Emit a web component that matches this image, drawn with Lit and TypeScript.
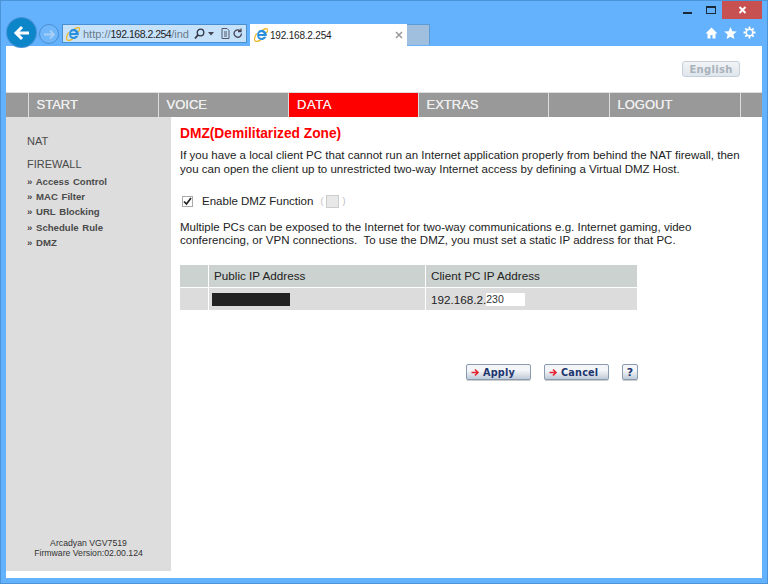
import { LitElement, html, css, svg } from "lit";
import { customElement } from "lit/decorators.js";

const ieIcon = (size: number) => html`<svg class="ie" width=${size} height=${size} viewBox="0 0 16 16">
  <path d="M3 6C.8 10 .2 13.700 1.300 14.700c1.200 1.100 4 .5 6.500-1.100" fill="none" stroke="#ecb92c" stroke-width="1.500"/>
  <path d="M9.500 2.500C12.500.6 14.800.4 15.300 1.300c.6.900 0 2.700-1.300 4.700" fill="none" stroke="#ecb92c" stroke-width="1.500"/>
  <path d="M8.500 2a6 6 0 0 1 6 7.200H5.700c.3 2.400 4 2.900 5.800.8h2.700c-1.300 2.700-3.500 3.800-5.700 3.800A6 6 0 0 1 8.500 2zM5.700 6.800h5.400c-.2-2.500-5-2.500-5.400 0z" fill="#2a8fdc" fill-rule="evenodd"/>
</svg>`;

const redArrow = svg`<path d="M.5 4.500h6.500M4 1.500l3 3-3 3" fill="none" stroke="#e8232f" stroke-width="1.600"/>`;

@customElement("app-root")
export class AppRoot extends LitElement {
  static styles = css`
    :host { display: block; width: 768px; height: 584px; font-family: "Liberation Sans", Arial, sans-serif; color: #222; overflow: hidden; }
    .window { position: relative; box-sizing: border-box; width: 768px; height: 584px; background: #64b1fd; border: 1px solid #4b94d8; padding: 0 5px 5px; display: flex; flex-direction: column; }
    .chrome { height: 45px; flex: none; position: relative; display: flex; align-items: flex-start; box-sizing: border-box; padding-top: 17px; }
    .back { position: absolute; left: 1px; top: 17px; width: 29px; height: 29px; border-radius: 50%; background: #0d86c9; display: flex; align-items: center; justify-content: center; box-shadow: 0 0 0 1px #4b94d8; }
    .fwd { position: absolute; left: 33px; top: 23px; width: 20px; height: 20px; box-sizing: border-box; border-radius: 50%; border: 1px solid #4a8fd0; background: #6fb6fb; display: flex; align-items: center; justify-content: center; }
    .addr { position: absolute; left: 56px; top: 23px; width: 185px; height: 19px; box-sizing: border-box; border: 1px solid #4a8fcf; background: #c6e2fb; display: flex; align-items: center; padding-left: 3px; font-size: 11px; color: #6a7b8a; white-space: nowrap; }
    .addr b { font-weight: normal; color: #222; font-size: 10.500px; letter-spacing: -.5px; }
    .addr .url { margin-left: 3px; width: 108px; overflow: hidden; flex: none; }
    .addr .tools { display: flex; align-items: center; gap: 3px; margin-left: 3px; }
    .addr .compat { margin-left: 4px; }
    .tab { position: absolute; left: 244px; top: 23px; width: 157px; height: 22px; background: #fff; display: flex; align-items: center; padding-left: 4px; box-sizing: border-box; font-size: 10px; letter-spacing: -.2px; color: #222; }
    .tab span { margin-left: 2px; flex: 1; }
    .tab .x { flex: none; margin-right: 4px; font-size: 0; }
    .newtab { position: absolute; left: 401px; top: 23px; width: 23px; height: 21px; background: #a0bfde; border: 1px solid #5b9bd8; border-left: none; border-bottom: none; box-sizing: border-box; }
    .caption { position: absolute; right: 0; top: 0; display: flex; align-items: flex-start; }
    .caption .min { width: 9px; height: 2px; background: #1b2a38; margin: 11px 14px 0 0; }
    .caption .max { width: 10px; height: 8px; box-sizing: border-box; border: 1px solid #1b2a38; border-top-width: 2px; margin: 5px 6px 0 0; }
    .caption .close { width: 40px; height: 18px; background: #c75050; display: flex; align-items: center; justify-content: center; }
    .tools-right { position: absolute; right: 6px; top: 25px; display: flex; gap: 6px; align-items: center; }

    .page { flex: 1; background: #fff; display: flex; flex-direction: column; min-height: 0; }
    .head { height: 47px; flex: none; display: flex; justify-content: flex-end; align-items: flex-start; padding: 15px 22px 0 0; box-sizing: border-box; border-bottom: 1px solid #ddd; }
    .lang { width: 58px; height: 16px; box-sizing: border-box; border: 1px solid #c5d0da; border-radius: 3px; background: linear-gradient(#f2f4f6, #dfe6ec); font: bold 10px "DejaVu Sans", sans-serif; letter-spacing: .3px; color: #a8b2bc; display: flex; align-items: center; justify-content: center; }
    nav { height: 24px; flex: none; background: #999; display: grid; grid-template-columns: 22px 130px 130px 130px 130px 61px 131px 1fr; }
    nav div { box-sizing: border-box; border-left: 1px solid #ddd; color: #eee; font-size: 13px; display: flex; align-items: center; padding: 0 0 1px 7.500px; text-shadow: 0 0 .6px #fff; }
    nav div:first-child { border-left: none; }
    nav .on { background: #f00; color: #f4e9e9; padding-left: 8px; letter-spacing: .6px; }
    .body { flex: 1; display: flex; min-height: 0; }
    aside { width: 165px; flex: none; background: #ddd; margin-bottom: 7px; display: flex; flex-direction: column; padding: 18px 0 0 21px; box-sizing: border-box; color: #444; }
    aside .top { font-size: 11px; line-height: 13px; margin-bottom: 10px; color: #4a4a4a; }
    aside ul { list-style: none; margin: -7px 0 0; padding: 0; font-size: 9.600px; font-weight: bold; color: #4a4a4a; }
    aside li { height: 15.200px; line-height: 15px; white-space: nowrap; word-spacing: 1px; }
    aside .foot { margin: auto 0 13px -21px; text-align: center; font-size: 8.700px; line-height: 10px; color: #333; }
    main { flex: 1; padding: 9px 0 0 9px; min-width: 0; color: #222; }
    h1 { margin: 0; font-size: 13.750px; line-height: 16px; font-weight: bold; color: #f00; }
    p { margin: 0; font-size: 11.520px; white-space: nowrap; }
    .intro { margin-top: 6px; line-height: 14px; }
    .enable { display: flex; align-items: center; margin: 17px 0 0 2px; height: 16px; font-size: 11.520px; }
    .check { width: 11px; height: 11px; box-sizing: border-box; border: 1px solid #aaa; background: #fff; display: flex; margin-right: 9px; }
    .paren { color: #bbb; font-size: 9px; margin-left: 7px; display: flex; align-items: center; gap: 3px; }
    .paren i { width: 11px; height: 11px; border: 1px solid #ccc; background: #e8e8e8; display: block; }
    .multi { margin-top: 12px; line-height: 13px; }
    .ip-table { margin-top: 18px; width: 457px; display: grid; grid-template-columns: 28px 216px 1fr; gap: 1px; font-size: 11.700px; }
    .ip-table > div { height: 22px; display: flex; align-items: center; padding: 0 0 2px 5px; box-sizing: border-box; }
    .hd { background: #ccd2cf; }
    .rw { background: #dcdcdc; }
    .ip-table .maskcell { padding-bottom: 0; }
    .mask { width: 78px; height: 13px; background: #222; margin-left: -2px; }
    .ipfield { width: 39px; height: 13px; background: #fff; font-size: 10.500px; line-height: 13px; color: #333; }
    .actions { display: flex; margin: 54px 0 0 286px; align-items: center; }
    .btn { height: 16px; box-sizing: border-box; border: 1px solid #8a9bb0; border-radius: 2px; background: linear-gradient(#f3f5f8 40%, #bfcbd8); display: flex; align-items: center; gap: 3px; padding-left: 4px; font: bold 9.700px "DejaVu Sans", sans-serif; color: #1c3570; letter-spacing: .2px; box-shadow: 0 1px 0 #ccc; }
    .apply, .cancel { width: 65px; margin-right: 13px; }
    .help { width: 16px; font-size: 11px; justify-content: center; padding-left: 0; }
    svg { display: block; flex: none; }
  `;

  render() {
    return html`<div class="window">
      <div class="chrome">
        <div class="back"><svg width="18" height="16" viewBox="0 0 18 16"><path d="M16 8H3M9 2L3 8l6 6" fill="none" stroke="#fff" stroke-width="3"/></svg></div>
        <div class="fwd"><svg width="13" height="11" viewBox="0 0 13 11"><path d="M1 5.500h10M7 1.500l4 4-4 4" fill="none" stroke="#a9cff5" stroke-width="1.800"/></svg></div>
        <div class="addr">
          ${ieIcon(14)}
          <span class="url">http://<b>192.168.2.254</b>/ind</span>
          <span class="tools">
            <svg width="11" height="12" viewBox="0 0 11 12"><circle cx="6.500" cy="4.500" r="3.300" fill="none" stroke="#334" stroke-width="1.300"/><path d="M4 7L1 10.500" stroke="#334" stroke-width="1.800"/></svg>
            <svg width="6" height="4" viewBox="0 0 6 4"><path d="M0 0h6L3 3.500z" fill="#445"/></svg>
            <svg class="compat" width="9" height="11" viewBox="0 0 9 11"><path d="M1 .5h5l2 2v8H1zM3 4h3M3 6h3M3 8h3" fill="none" stroke="#556" stroke-width="1"/></svg>
            <svg width="10" height="11" viewBox="0 0 10 11"><path d="M8.500 5.500a3.700 3.700 0 1 1-1.200-2.700M8 .5v3H5" fill="none" stroke="#445" stroke-width="1.300"/></svg>
          </span>
        </div>
        <div class="tab">
          ${ieIcon(14)}
          <span>192.168.2.254</span>
          <svg class="x" width="8" height="8" viewBox="0 0 8 8"><path d="M1 1l6 6M7 1L1 7" stroke="#999" stroke-width="1.500"/></svg>
        </div>
        <div class="newtab"></div>
        <div class="caption">
          <div class="min"></div>
          <div class="max"></div>
          <div class="close"><svg width="9" height="8" viewBox="0 0 9 8"><path d="M1.500 1l6 6M7.500 1l-6 6" stroke="#fff" stroke-width="2"/></svg></div>
        </div>
        <div class="tools-right">
          <svg width="13" height="12" viewBox="0 0 13 12"><path d="M6.500.5L.5 6.500h2V11.500h3V8h2v3.500h3V6.500h2z" fill="#fff"/></svg>
          <svg width="13" height="12" viewBox="0 0 13 12"><path d="M6.500 0l1.800 4.200 4.500.4-3.400 3 1 4.400-3.900-2.300L2.600 12l1-4.400L.2 4.600l4.500-.4z" fill="#fff"/></svg>
          <svg width="13" height="13" viewBox="0 0 13 13"><circle cx="6.500" cy="6.500" r="3.300" fill="none" stroke="#fff" stroke-width="1.600"/><path d="M6.500.5v2.400M6.500 10v2.500M.5 6.500h2.400M10 6.500h2.500M2.300 2.300L4 4M9 9l1.700 1.700M10.700 2.300L9 4M4 9l-1.700 1.700" stroke="#fff" stroke-width="1.800"/></svg>
        </div>
      </div>
      <div class="page">
        <div class="head"><div class="lang">English</div></div>
        <nav>
          <div></div><div>START</div><div>VOICE</div><div class="on">DATA</div><div>EXTRAS</div><div></div><div>LOGOUT</div><div></div>
        </nav>
        <div class="body">
          <aside>
            <div class="top">NAT</div>
            <div class="top">FIREWALL</div>
            <ul>
              <li>» Access Control</li>
              <li>» MAC Filter</li>
              <li>» URL Blocking</li>
              <li>» Schedule Rule</li>
              <li>» DMZ</li>
            </ul>
            <div class="foot">Arcadyan VGV7519<br />Firmware Version:02.00.124</div>
          </aside>
          <main>
            <h1>DMZ(Demilitarized Zone)</h1>
            <p class="intro">If you have a local client PC that cannot run an Internet application properly from behind the NAT firewall, then<br />you can open the client up to unrestricted two-way Internet access by defining a Virtual DMZ Host.</p>
            <div class="enable">
              <span class="check"><svg width="9" height="9" viewBox="0 0 9 9"><path d="M1 4.500l2.500 2.500L8 1" fill="none" stroke="#222" stroke-width="1.700"/></svg></span>
              Enable DMZ Function
              <span class="paren">( <i></i> )</span>
            </div>
            <p class="multi">Multiple PCs can be exposed to the Internet for two-way communications e.g. Internet gaming, video<br />conferencing, or VPN connections.&nbsp; To use the DMZ, you must set a static IP address for that PC.</p>
            <div class="ip-table">
              <div class="hd"></div><div class="hd">Public IP Address</div><div class="hd">Client PC IP Address</div>
              <div class="rw"></div><div class="rw maskcell"><div class="mask"></div></div><div class="rw maskcell">192.168.2.<span class="ipfield">230</span></div>
            </div>
            <div class="actions">
              <div class="btn apply"><svg width="9" height="9" viewBox="0 0 9 9">${redArrow}</svg>Apply</div>
              <div class="btn cancel"><svg width="9" height="9" viewBox="0 0 9 9">${redArrow}</svg>Cancel</div>
              <div class="btn help">?</div>
            </div>
          </main>
        </div>
      </div>
    </div>`;
  }
}
